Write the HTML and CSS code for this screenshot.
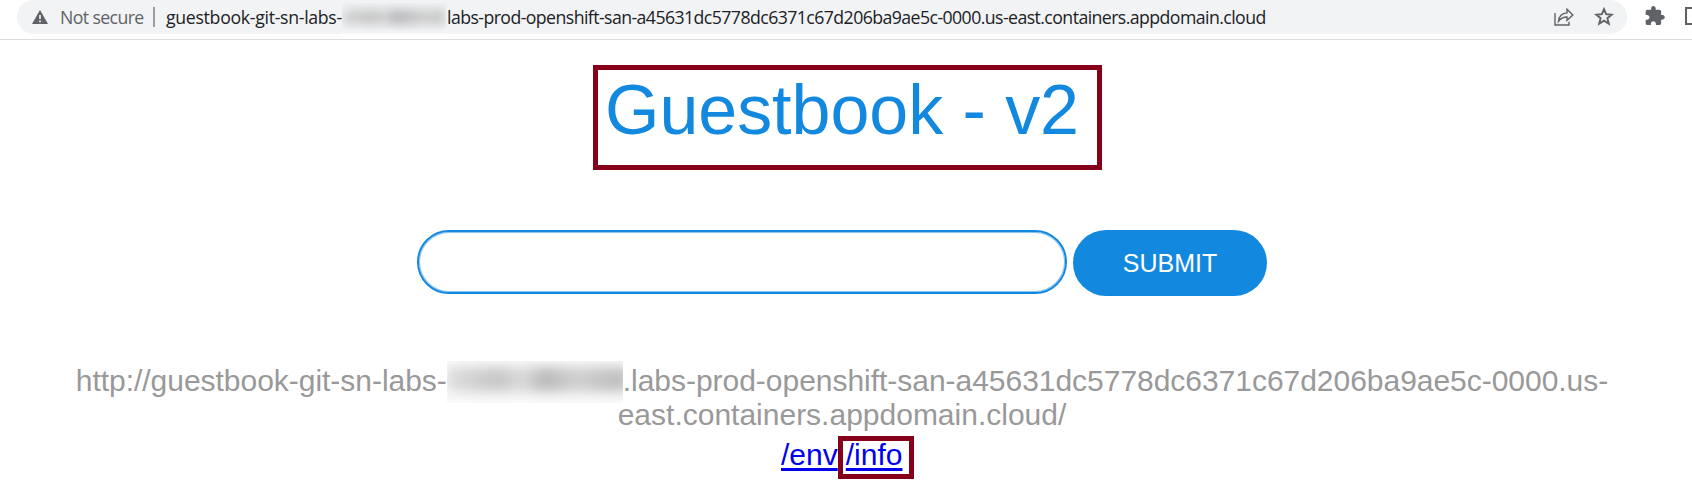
FILE: index.html
```html
<!DOCTYPE html>
<html lang="en">
<head>
<meta charset="utf-8">
<title>Guestbook - v2</title>
<link rel="stylesheet" href="styles.css">
</head>
<body>
<header class="toolbar">
  <div class="omnibox">
    <svg class="warn" width="16" height="14" viewBox="0 0 16 14"><path d="M8 0 16 14H0Z" fill="#5f6368"/><path d="M8 5v4M8 10.4v1.8" stroke="#f1f3f4" stroke-width="1.7"/></svg>
    <span class="status">Not secure</span>
    <span class="divider"></span>
    <span class="address"><span class="addr-start">guestbook-git-sn-labs-</span><span class="smudge smudge-small"><i class="blob"></i></span><span class="addr-end">labs-prod-openshift-san-a45631dc5778dc6371c67d206ba9ae5c-0000.us-east.containers.appdomain.cloud</span></span>
    <svg class="share" width="20" height="18" viewBox="0 0 20 18" fill="none" stroke="#5f6368" stroke-width="1.4"><path d="M1 5v12h14v-3.3"/><path d="M4.500 13.300C5 8.500 8 5.200 13 4.900V1.200L18.800 7 13 12.300V9C9 9 6.600 10.300 4.500 13.300Z"/></svg>
    <svg class="star" width="20" height="19" viewBox="0 0 20 19" fill="none" stroke="#5f6368" stroke-width="1.9"><path d="M10 2.200 12.100 7.200 17.700 7.700 13.400 11.200 14.800 16.700 10 13.700 5.200 16.700 6.600 11.200 2.300 7.700 7.900 7.200Z"/></svg>
  </div>
  <svg class="puzzle" width="20" height="20" viewBox="1.500 1 21.500 22" fill="#5f6368"><path d="M20.500 11H19V7c0-1.100-.9-2-2-2h-4V3.500C13 2.120 11.880 1 10.500 1S8 2.120 8 3.500V5H4c-1.100 0-1.990.9-1.990 2v3.800H3.500c1.490 0 2.700 1.210 2.700 2.700s-1.210 2.700-2.700 2.700H2V20c0 1.100.9 2 2 2h3.800v-1.500c0-1.490 1.210-2.700 2.700-2.700 1.490 0 2.700 1.210 2.700 2.700V22H17c1.100 0 2-.9 2-2v-4h1.500c1.380 0 2.500-1.120 2.500-2.500S21.880 11 20.500 11z"/></svg>
  <span class="panel"></span>
</header>
<main class="page">
  <h1 class="title">Guestbook - v2</h1>
  <form class="entry">
    <input class="field" type="text" aria-label="Entry">
    <button class="submit" type="button">SUBMIT</button>
  </form>
  <div class="host">
    <div class="host-line host-first"><span>http://guestbook-git-sn-labs-</span><span class="smudge smudge-large"><i class="blob"></i></span><span>.labs-prod-openshift-san-a45631dc5778dc6371c67d206ba9ae5c-0000.us-</span></div>
    <div class="host-line">east.containers.appdomain.cloud/</div>
  </div>
  <nav class="links"><a class="env" href="#env">/env</a><span class="info-box"><a href="#info">/info</a></span></nav>
</main>
</body>
</html>
```
FILE: styles.css
```css
* { box-sizing: border-box; }
body {
  margin: 0;
  width: 1692px;
  height: 498px;
  overflow: hidden;
  background: #fff;
  font-family: "Liberation Sans", Arial, sans-serif;
}
.toolbar {
  display: flex;
  height: 40px;
  padding-left: 17px;
  border-bottom: 1px solid #dadce0;
  overflow: hidden;
}
.omnibox {
  display: flex;
  flex: none;
  width: 1610px;
  height: 34px;
  padding-left: 15px;
  border-radius: 17px;
  background: #f1f3f4;
  font: 17.7px/34px "Open Sans", "Noto Sans", sans-serif;
  white-space: nowrap;
  color: #202124;
}
.warn { flex: none; margin-top: 10px; }
.status { width: 93px; padding-left: 12px; margin-right: 12px; color: #5f6368; letter-spacing: -0.6px; }
.status { flex: none; width: 109px; margin-right: 0; }
.divider { flex: none; width: 2px; height: 20px; margin: 7px 11px 0 -4px; background: #9a9da1; }
.address { display: flex; width: 1100px; }
.addr-start { flex: none; width: 176px; letter-spacing: -0.3px; }
.addr-end { padding-left: 1px; letter-spacing: -0.565px; }
.smudge { flex: none; display: block; overflow: hidden; }
.smudge-small { width: 104px; height: 31px; margin-top: 3px; background: linear-gradient(#f1f3f4, #f1f3f4 80%, #fafafa); }
.blob { display: block; }
.smudge-small .blob { width: 102px; height: 16px; margin: 6px 1px; background: linear-gradient(90deg, #d5d5d6, #c6c6c7 30%, #d5d5d6 40%, #b9b9bb 52%, #d0d0d1 80%, #c8c8c9); filter: blur(5px); }
.share { flex: none; margin: 8px 20px 0 auto; }
.star { flex: none; margin: 7px 13px 0 0; }
.puzzle { flex: none; margin: 6px 0 0 18px; }
.panel { flex: none; width: 20px; height: 18px; margin: 7px 0 0 20px; border: 2px solid #5f6368; }
.page { display: flex; flex-direction: column; align-items: center; width: 1684px; padding-top: 25px; }
.title {
  width: 509px;
  height: 105px;
  margin: 0 0 0 11px;
  padding-left: 7px;
  border: 5px solid #860019;
  color: #1388df;
  font-size: 70px;
  font-weight: 400;
  line-height: 80px;
  letter-spacing: -0.05px;
  white-space: nowrap;
}
.entry { display: flex; align-items: flex-start; gap: 6px; margin: 60px 0 0; }
.field { width: 650px; height: 64px; border: 2px solid #1388df; border-radius: 32px; background: #fff; box-shadow: inset 0 0 0 1px #1388df80; outline: 0; }
.submit { width: 194px; height: 66px; padding: 0; border: 0; border-radius: 33px; background: #1388df; color: #fff; font: 25px "Liberation Sans", Arial, sans-serif; }
.host { margin-top: 68px; color: #999; font-size: 30px; line-height: 34px; text-align: center; white-space: nowrap; }
.host-line { display: flex; justify-content: center; height: 34px; }
.host-first { letter-spacing: -0.03px; }
.smudge-large { width: 176px; height: 42px; margin-top: -3px; background: #fafafa; }
.smudge-large .blob { width: 182px; height: 25px; margin: 6px 0 0 -1px; background: linear-gradient(90deg, #dfdfdf, #c6c6c6 28%, #dadada 42%, #b9b9b9 54%, #d0d0d0 72%, #c0c0c0 92%); filter: blur(6px); }
.links { display: flex; align-items: flex-start; width: 133px; margin-top: 4px; margin-left: 11px; font-size: 30px; line-height: 34px; }
.links a { color: #00e; text-underline-offset: 3px; text-decoration-thickness: 3px; }
.env { margin-top: 2px; }
.info-box { flex: none; width: 76px; height: 43px; border: 5px solid #860019; padding-left: 3px; line-height: 28px; }
```
